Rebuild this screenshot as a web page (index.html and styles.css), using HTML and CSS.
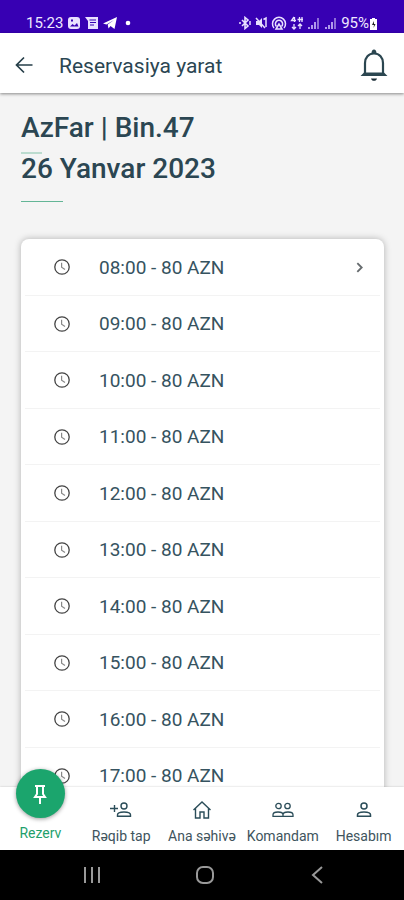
FILE: index.html
```html
<!DOCTYPE html>
<html lang="az">
<head>
<meta charset="utf-8">
<meta name="viewport" content="width=device-width, initial-scale=1">
<title>Reservasiya yarat</title>
<link rel="stylesheet" href="styles.css">
</head>
<body>
<svg class="defs" aria-hidden="true">
  <symbol id="clock" viewBox="0 0 18 18"><circle cx="9" cy="9" r="7.2" fill="none" stroke="#444" stroke-width="1.3"/><path d="M8.6 4.8v4.5l3.4 2.3" fill="none" stroke="#888" stroke-width="1.2"/></symbol>
</svg>
<div class="status">
  <div class="status-group">
    <span class="time">15:23</span>
    <svg width="14" height="14" viewBox="0 0 14 14"><rect x="1" y="1" width="12" height="12" rx="3" fill="#e9e0ff"/><path d="M3 10.5 5.5 8l2 1.5L10 7l1.500 3.500zM4 3.500h2v2H4z" fill="#3700b3"/></svg>
    <svg width="14" height="14" viewBox="0 0 14 14"><path d="M0 1h13v12H3V5z" fill="#e9e0ff"/><path d="M4.500 4h6.500M5 6.500h6M5 9h4" stroke="#3700b3" stroke-width="1.200"/></svg>
    <svg width="14" height="14" viewBox="0 0 14 14"><path d="M0 7.500 14 1l-2.500 12-4-3-2 2.500-.8-4L11 4 3.500 8.500z" fill="#fff"/></svg>
    <svg class="dot" width="6" height="6" viewBox="0 0 6 6"><circle cx="3" cy="3" r="2.300" fill="#fff"/></svg>
  </div>
  <div class="status-group status-right">
    <svg width="12" height="14" viewBox="0 0 12 14"><path d="m3 4 6 6-3 2.500v-11L9 4l-6 6" fill="none" stroke="#e9e0ff" stroke-width="1.600"/><path d="M1 6v2M11 5v4" stroke="#e9e0ff" stroke-width="1.500"/></svg>
    <svg width="14" height="14" viewBox="0 0 14 14"><path d="M2 5h3l3-3v10L5 9H2z" fill="#e9e0ff"/><path d="m2 2 9 10M9.500 3.500 12 2v9" fill="none" stroke="#e9e0ff" stroke-width="1.500"/></svg>
    <svg width="16" height="14" viewBox="0 0 16 14"><g fill="none" stroke="#e9e0ff" stroke-width="1.500"><path d="M3 12a6.500 6.500 0 1 1 10 0"/><path d="M5.500 10.500a3.600 3.600 0 1 1 5 0"/><path d="m8 8-3 5h6z"/></g></svg>
    <svg width="14" height="14" viewBox="0 0 14 14"><g fill="none" stroke="#e9e0ff" stroke-width="1.300"><path d="M4 1 1.500 4.500H6M4.500 1v5M9.500 1v5M7.500 3.500H13M12 1v5M4 8v5M2 11l2 2 2-2M10 13V8M8 10l2-2 2 2"/></g></svg>
    <svg width="14" height="14" viewBox="0 0 14 14"><path d="M2 13v-2M5 13V9M8 13V6" stroke="#d9ccff" stroke-width="1.500"/><path d="M11 13V2" stroke="#8e6fd8" stroke-width="2"/></svg>
    <svg width="14" height="14" viewBox="0 0 14 14"><path d="M2 13v-2M5 13V9M8 13V6" stroke="#d9ccff" stroke-width="1.500"/><path d="M11 13V2" stroke="#8e6fd8" stroke-width="2"/></svg>
    <span class="battery">95%<svg width="9" height="13" viewBox="0 0 9 13"><path d="M3 1h3v1h2v11H1V2h2z" fill="#fff"/><path d="M5 4 3 8h2l-.5 3L6.500 7H5z" fill="#222"/></svg></span>
  </div>
</div>
<header class="bar">
  <button class="icon-btn" aria-label="Geri"><svg width="20" height="20" viewBox="0 0 20 20"><path d="M18.500 10H3M10 2.500 2.500 10l7.500 7.500" fill="none" stroke="#263f49" stroke-width="1.700"/></svg></button>
  <h1>Reservasiya yarat</h1>
  <button class="icon-btn" aria-label="Bildirişlər"><svg width="30" height="34" viewBox="0 0 30 34"><path d="M6 26V15c0-5.500 3.500-9.500 9-9.500s9 4 9 9.500v11" fill="none" stroke="#2b4650" stroke-width="2.200"/><path d="M1.500 28 5 24.500h20l3.500 3.500zM12.500 5.500C12.500 3 13.500 1.500 15 1.500s2.500 1.500 2.500 4z" fill="#2b4650"/><path d="M12 30.500h6c-.4 1.500-1.500 2.300-3 2.300s-2.600-.8-3-2.300z" fill="#1c2f38"/></svg></button>
</header>
<main>
  <h2 class="venue">AzFar | Bin.47</h2>
  <h2 class="date">26 Yanvar 2023</h2>
  <ul class="slots">
    <li><button><svg class="clock"><use href="#clock"/></svg><span>08:00 - 80 AZN</span><svg class="chevron" viewBox="0 0 8 12"><path d="m2 2 4 4-4 4" fill="none" stroke="#666b6e" stroke-width="1.700"/></svg></button></li>
    <li><button><svg class="clock"><use href="#clock"/></svg><span>09:00 - 80 AZN</span></button></li>
    <li><button><svg class="clock"><use href="#clock"/></svg><span>10:00 - 80 AZN</span></button></li>
    <li><button><svg class="clock"><use href="#clock"/></svg><span>11:00 - 80 AZN</span></button></li>
    <li><button><svg class="clock"><use href="#clock"/></svg><span>12:00 - 80 AZN</span></button></li>
    <li><button><svg class="clock"><use href="#clock"/></svg><span>13:00 - 80 AZN</span></button></li>
    <li><button><svg class="clock"><use href="#clock"/></svg><span>14:00 - 80 AZN</span></button></li>
    <li><button><svg class="clock"><use href="#clock"/></svg><span>15:00 - 80 AZN</span></button></li>
    <li><button><svg class="clock"><use href="#clock"/></svg><span>16:00 - 80 AZN</span></button></li>
    <li><button><svg class="clock"><use href="#clock"/></svg><span>17:00 - 80 AZN</span></button></li>
  </ul>
</main>
<nav class="tabs">
  <a href="#" class="active"><span class="fab"><svg width="14" height="22" viewBox="0 0 14 22"><path d="M2 3h10M4 3v8L2 14h10l-2-3V3M7 14v7" fill="none" stroke="#fff" stroke-width="2"/></svg></span><span>Rezerv</span></a>
  <a href="#"><svg width="22" height="18" viewBox="0 0 22 18"><g fill="none" stroke="#2b4d59" stroke-width="1.400"><circle cx="14" cy="5" r="3"/><path d="M7.500 15.300v-1.500c0-2 3-2.800 6.500-2.800s6.500.8 6.500 2.800v1.500zM0 7.500h8M4.500 4v7"/></g></svg><span>Rəqib tap</span></a>
  <a href="#"><svg width="22" height="18" viewBox="0 0 22 18"><path d="M2.500 9 11 1l8.500 8M4.500 7.500V17h4.500v-6h4v6h4.500V7.500" fill="none" stroke="#2b4d59" stroke-width="1.400"/></svg><span>Ana səhivə</span></a>
  <a href="#"><svg width="22" height="18" viewBox="0 0 22 18"><g fill="none" stroke="#2b4d59" stroke-width="1.300"><circle cx="6.500" cy="5" r="2.700"/><circle cx="15.500" cy="5" r="2.700"/><path d="M1 15.300v-1.500C1 12 3.500 11 6 11s5 1 5 2.800v1.500zM11 13.800C11 12 13.500 11 16 11s5 1 5 2.800v1.500H11"/></g></svg><span>Komandam</span></a>
  <a href="#"><svg width="22" height="18" viewBox="0 0 22 18"><g fill="none" stroke="#2b4d59" stroke-width="1.500"><circle cx="11" cy="5" r="3"/><path d="M4.500 15.300v-1.500c0-2 3-2.800 6.500-2.800s6.500.8 6.500 2.800v1.500z"/></g></svg><span>Hesabım</span></a>
</nav>
<div class="system">
  <button aria-label="Son tətbiqlər"><svg width="20" height="20" viewBox="0 0 20 20"><path d="M3 2v16M10 2v16M17 2v16" stroke="#999" stroke-width="2"/></svg></button>
  <button aria-label="Əsas ekran"><svg width="20" height="20" viewBox="0 0 20 20"><rect x="2" y="2" width="16" height="16" rx="6" fill="none" stroke="#999" stroke-width="2"/></svg></button>
  <button aria-label="Geri"><svg width="20" height="20" viewBox="0 0 20 20"><path d="m14 2-9 8 9 8" fill="none" stroke="#999" stroke-width="2"/></svg></button>
</div>
</body>
</html>
```
FILE: styles.css
```css
* { box-sizing: border-box; }
body {
  margin: 0;
  height: 100vh;
  display: flex;
  flex-direction: column;
  overflow: hidden;
  background: #f4f4f4;
  color: #2b4652;
  font-family: Roboto, "Liberation Sans", sans-serif;
}
button { border: 0; padding: 0; background: none; font: inherit; color: inherit; cursor: pointer; }
svg { display: block; flex: none; }
h1, h2, ul { margin: 0; padding: 0; }
.defs { position: absolute; width: 0; height: 0; }

.status {
  flex: none;
  height: 33px;
  padding: 13px 26px 0;
  display: flex;
  justify-content: space-between;
  align-items: center;
  background: #3700b3;
  color: #efe8ff;
  font-size: 15px;
}
.status-group { display: flex; align-items: center; gap: 4px; }
.status-group .dot { margin-left: 4px; }
.status-right { gap: 3px; }
.battery { display: flex; align-items: center; }

.bar {
  flex: none;
  position: relative;
  z-index: 1;
  height: 60px;
  padding: 0 15px 0 14px;
  display: flex;
  align-items: center;
  background: #fff;
  box-shadow: 0 1px 3px rgba(0, 0, 0, .45);
}
.bar h1 { flex: 1; margin-left: 25px; padding-top: 5px; font-size: 21px; line-height: 24px; font-weight: 400; }
.bar .icon-btn { padding-top: 4px; }

main { flex: 1; min-height: 0; overflow: hidden; padding: 18px 20px 0 21px; }
h2 { font-size: 28px; line-height: 34px; font-weight: 500; color: #2b4652; }
h2::after { content: ""; display: block; height: 1px; }
.venue::after { width: 21px; margin-top: 7px; height: 2px; background: #bcdccf; }
.venue { height: 41px; }
.date::after { width: 42px; margin-top: 15px; background: #63b596; }

.slots {
  margin-top: 37px;
  list-style: none;
  background: #fff;
  border-radius: 8px;
  box-shadow: 0 0 7px rgba(0, 0, 0, .28);
}
.slots li { height: 57px; padding: 0 4px; }
.slots li:nth-child(even) { height: 56px; }
.slots button {
  width: 100%;
  height: 100%;
  display: flex;
  align-items: center;
  padding: 0 16px 0 28px;
  border-bottom: 1px solid #f3f3f3;
  text-align: left;
  font-size: 19px;
}
.slots span { flex: 1; color: #36535f; }
.clock { width: 18px; height: 18px; margin-right: 28px; }
.chevron { width: 9px; height: 13px; }

.tabs {
  flex: none;
  position: relative;
  height: 63px;
  display: flex;
  background: #fff;
  box-shadow: 0 0 2px rgba(0, 0, 0, .2);
}
.tabs a {
  flex: 1 1 0;
  min-width: 0;
  padding-top: 14px;
  display: flex;
  flex-direction: column;
  align-items: center;
  gap: 9px;
  color: #40545d;
  text-decoration: none;
  font-size: 14px;
  line-height: 16px;
  white-space: nowrap;
}
.tabs .active { padding-top: 0; gap: 7px; margin-top: -18px; color: #1f9f6c; }
.fab {
  flex: none;
  width: 49px;
  height: 49px;
  display: flex;
  align-items: center;
  justify-content: center;
  border-radius: 50%;
  background: #1ba56d;
  box-shadow: 0 1px 4px rgba(0, 0, 0, .4);
}
.system {
  flex: none;
  height: 50px;
  padding: 0 29px 0 35px;
  display: flex;
  align-items: center;
  background: #000;
}
.system button { flex: 1; display: flex; justify-content: center; }
```
